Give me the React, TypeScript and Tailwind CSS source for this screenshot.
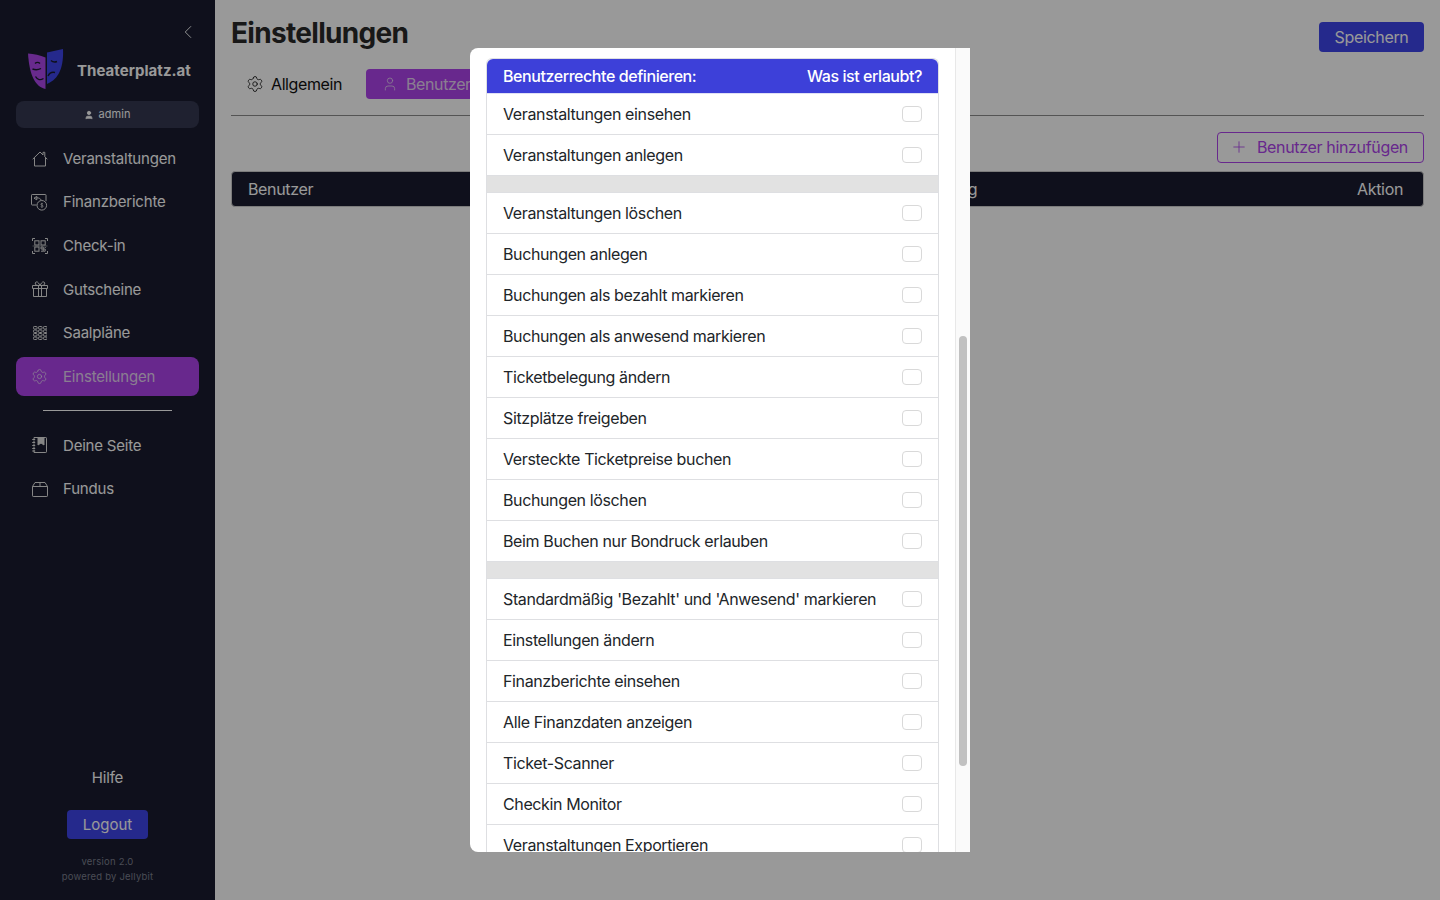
import React from "react";
import { Settings, User, Plus, ChevronLeft } from "lucide-react";

const ff = { fontFamily: "Inter, 'Liberation Sans', sans-serif" };

function HomeIcon() {
  return (
    <svg width="16" height="16" viewBox="0 0 16 16" fill="none" stroke="currentColor" strokeWidth="1" strokeLinejoin="round">
      <path d="M.7 8.200 8 1l3 3V1.300h1.800v4.500l2.500 2.400" />
      <path d="M2.500 6.800V15h11V6.800" />
    </svg>
  );
}

function FinanceIcon() {
  return (
    <svg width="17" height="17" viewBox="0 0 17 17" fill="none" stroke="currentColor" strokeWidth="1">
      <path d="M5.500 11H1.200a.7.7 0 0 1-.7-.7V1.200a.7.7 0 0 1 .7-.7h13.100a.7.7 0 0 1 .7.7v6" />
      <path d="M3 4.200 5.800 2.400v3.400zM5.800 3.800c2 0 3.700.8 4.500 2.300" />
      <circle cx="10.800" cy="11.300" r="4.800" />
      <path d="M12 9.900c-.7-.6-2.200-.5-2.200.4 0 1.100 2.400.8 2.400 1.900 0 1-1.700 1-2.500.4M10.900 8.800v5" strokeWidth="0.7" />
    </svg>
  );
}

function NotebookIcon() {
  return (
    <svg width="15" height="16" viewBox="0 0 15 16" fill="none" stroke="currentColor" strokeWidth="1">
      <path d="M2 .5h11.800a.7.700 0 0 1 .7.7v13.600a.7.700 0 0 1-.7.700H2" />
      <path d="M.2 2.500h3M.2 5.500h3M.2 8.500h3M.2 11.500h3M.2 14h3" />
      <path d="M2 .5v2M2 3.500v2M2 6.500v2M2 9.500v2M2 12.500v3" />
      <path d="M6 .5h6v7.500L9 6 6 8z" fill="currentColor" />
    </svg>
  );
}

function BoxIcon() {
  return (
    <svg width="16" height="15" viewBox="0 0 16 15" fill="none" stroke="currentColor" strokeWidth="1">
      <path d="M.5 4.500h15v9.300a.7.700 0 0 1-.7.700H1.200a.7.700 0 0 1-.7-.7z" />
      <path d="M.5 4.500 3 .5h10l2.500 4" />
      <path d="M8 .8v3.700" />
    </svg>
  );
}

function GiftIcon() {
  return (
    <svg width="16" height="16" viewBox="0 0 16 16" fill="none" stroke="currentColor" strokeWidth="1">
      <path d="M.5 4.500h15v3h-15zM1.500 7.500v8h13v-8" />
      <path d="M6.500 4.500v11M9.500 4.500v11" />
      <path d="M6.500 4.500C4 4.500 3 3.500 3.300 2 3.700.5 5.500.5 6.500 2l1.500 2.500L9.500 2c1-1.500 2.800-1.500 3.200 0 .3 1.500-.7 2.500-3.200 2.500" />
    </svg>
  );
}

function SeatsIcon() {
  const cells = [];
  for (let y = 0; y < 4; y++) {
    for (let x = 0; x < 3; x++) {
      cells.push(<rect key={`${x}-${y}`} x={0.5 + x * 5} y={0.5 + y * 3.500} width="3.600" height="2.500" rx="0.8" />);
    }
  }
  return (
    <svg width="14" height="14" viewBox="0 0 14 14" fill="none" stroke="currentColor" strokeWidth="1">
      {cells}
    </svg>
  );
}

function QrIcon() {
  return (
    <svg width="16" height="16" viewBox="0 0 16 16" fill="none" stroke="currentColor" strokeWidth="1">
      <path d="M.5 3V.5H3M13 .5h2.500V3M15.500 13v2.500H13M3 15.500H.5V13" />
      <rect x="2.800" y="2.800" width="4.200" height="4.200" />
      <rect x="9" y="2.800" width="4.200" height="4.200" />
      <rect x="2.800" y="9" width="4.200" height="4.200" />
      <path d="M9 9h2.200v2H9zM11.200 11h2v2.200h-2zM9 13.200h2M13.200 9v1" />
      <path d="M.5 8h15" strokeWidth="0.5" />
    </svg>
  );
}

function Logo() {
  return (
    <svg width="36" height="41" viewBox="0 0 36 41">
      <path d="M0 4.500C6 5 12 6.300 17.500 8.500V40C8 38 1.500 28 0 4.500z" fill="#ad47eb" />
      <path d="M19 3.500 35 0c.5 10-1 19-4.500 25-3 5-7 8-11.500 10z" fill="#3f45e9" />
      <path d="M7 14.500c1.500-1.500 3.500-1.500 5 0M4.500 20c3 1.200 6 .8 8.500-.5M7.500 27.500c2 3.500 5 4 8 2" stroke="#191c2f" strokeWidth="1.400" fill="none" />
      <path d="M23 11.500c1.500 1.500 3.500 2 6 1M20 27c1.500-3 3.500-4.500 7-3.500" stroke="#191c2f" strokeWidth="1.400" fill="none" />
    </svg>
  );
}

const nav: [string, React.ReactNode, boolean?][] = [
  ["Veranstaltungen", <HomeIcon />],
  ["Finanzberichte", <FinanceIcon />],
  ["Check-in", <QrIcon />],
  ["Gutscheine", <GiftIcon />],
  ["Saalpläne", <SeatsIcon />],
  ["Einstellungen", <Settings size={19} strokeWidth={1} />, true],
];

function NavItem({ label, icon, active }: { label: string; icon: React.ReactNode; active?: boolean }) {
  return (
    <div className={`flex h-[39px] items-center rounded-lg pl-[15px] ${active ? "bg-[#ad43eb]" : ""}`}>
      <span className={`flex w-[17px] justify-center ${active ? "text-[#efe2f8]" : "text-[#e0e0e0]"}`}>{icon}</span>
      <span className={`ml-[15px] pt-[1px] text-[15px] tracking-[-0.2px] ${active ? "text-[#e6d3f2]" : "text-white"}`}>{label}</span>
    </div>
  );
}

function Sidebar() {
  return (
    <aside className="flex h-[900px] w-[215px] shrink-0 flex-col bg-[#191c2f] px-4">
      <div className="flex justify-end pt-[21px] text-white">
        <ChevronLeft size={22} strokeWidth={1} />
      </div>
      <div className="mt-[6px] flex items-center pl-[12px]">
        <Logo />
        <span className="ml-[13px] pt-[4px] text-[15px] font-bold tracking-[0.05px] text-white">Theaterplatz.at</span>
      </div>
      <div className="mt-[11px] flex h-[27px] items-center justify-center gap-1 rounded-lg bg-[#343750] text-[11px] tracking-[0.1px] text-white">
        <User size={10} fill="currentColor" />
        <span>admin</span>
      </div>
      <nav className="mt-[11px] flex flex-col gap-[4.600px]">
        {nav.map(([l, i, a]) => (
          <NavItem key={l} label={l} icon={i} active={a} />
        ))}
      </nav>
      <div className="mx-[27px] mt-[14px] h-px bg-white" />
      <div className="mt-[15px] flex flex-col gap-[4.600px]">
        <NavItem label="Deine Seite" icon={<NotebookIcon />} />
        <NavItem label="Fundus" icon={<BoxIcon />} />
      </div>
      <div className="mt-auto flex flex-col items-center pb-[16px]">
        <span className="text-[15px] tracking-[-0.2px] text-white">Hilfe</span>
        <div className="mt-[21px] flex h-[29px] w-[81px] items-center justify-center rounded bg-[#3f45e9] pt-[1px] text-[15px] text-white">Logout</div>
        <div className="mt-[15px] text-center text-[9.500px] leading-[15px] tracking-[0.2px] text-[#7d7f8e]">
          <div>version 2.0</div>
          <div>powered by Jellybit</div>
        </div>
      </div>
    </aside>
  );
}

function Main() {
  return (
    <main className="flex min-w-0 flex-1 flex-col pr-4 pl-4">
      <div className="flex items-start justify-between pt-[22px]">
        <h1 className="text-[28px] leading-[22px] font-bold tracking-[-0.68px] text-[#282828]">Einstellungen</h1>
        <div className="flex h-[30px] w-[105px] items-center justify-center rounded bg-[#3f45e9] text-[16px] tracking-[-0.33px] text-white">Speichern</div>
      </div>
      <div className="mt-[17px] flex h-[47px] items-start border-b border-[#8c8c8c] pl-[15px]">
        <div className="flex h-[30px] items-center gap-[7px] text-[16px] tracking-[-0.4px] text-[#111111]">
          <Settings size={18} strokeWidth={1.100} />
          <span>Allgemein</span>
        </div>
        <div className="ml-[24px] flex h-[30px] w-[180px] items-center gap-2 rounded bg-[#ad43eb] pl-4 text-[16px] tracking-[-0.4px] text-[#e6d3f2]">
          <User size={16} strokeWidth={1.200} />
          <span>Benutzer</span>
        </div>
      </div>
      <div className="mt-4 flex justify-end">
        <div className="flex h-[31px] w-[207px] items-center justify-end gap-[9px] rounded border border-[#ad43eb] pr-[15px] pb-[2px] text-[16px] tracking-[-0.34px] text-[#ad43eb]">
          <Plus size={18} strokeWidth={1.100} />
          <span>Benutzer hinzufügen</span>
        </div>
      </div>
      <div className="mt-[8px] flex h-[36px] items-center rounded border border-[#cfcfcf] bg-[#191c2f] pr-5 pb-[1px] pl-4 text-[16px] tracking-[-0.35px] text-white">
        <span>Benutzer</span>
        <span className="ml-auto">Berechtigung</span>
        <span className="ml-[380px]">Aktion</span>
      </div>
    </main>
  );
}

const group1 = ["Veranstaltungen einsehen", "Veranstaltungen anlegen"];
const group2 = [
  "Veranstaltungen löschen",
  "Buchungen anlegen",
  "Buchungen als bezahlt markieren",
  "Buchungen als anwesend markieren",
  "Ticketbelegung ändern",
  "Sitzplätze freigeben",
  "Versteckte Ticketpreise buchen",
  "Buchungen löschen",
  "Beim Buchen nur Bondruck erlauben",
];
const group3 = [
  "Standardmäßig 'Bezahlt' und 'Anwesend' markieren",
  "Einstellungen ändern",
  "Finanzberichte einsehen",
  "Alle Finanzdaten anzeigen",
  "Ticket-Scanner",
  "Checkin Monitor",
  "Veranstaltungen Exportieren",
];

function Row({ label }: { label: string }) {
  return (
    <div className="flex h-[41px] shrink-0 items-center justify-between border-b border-[#dedfe2] pr-4 pl-4 text-[16px] tracking-[-0.375px] text-[#212529]">
      <span>{label}</span>
      <span className="h-4 w-5 rounded border border-[#d9d9d9] bg-white" />
    </div>
  );
}

const Gap = () => <div className="h-[17px] shrink-0 border-b border-[#dedfe2] bg-[#e2e2e2]" />;

function Modal() {
  return (
    <div className="absolute top-[48px] left-[470px] flex h-[804px] w-[500px] overflow-hidden rounded-l-lg bg-white">
      <div className="min-w-0 flex-1 pt-[10px] pl-4">
        <div className="w-[453px] rounded-t-md border-x border-t border-[#dedfe2]">
          <div className="flex h-[35px] items-center justify-between rounded-t-md border-b border-[#dfe0f5] bg-[#3d40d9] px-4 text-[16px] font-medium tracking-[-0.43px] text-white">
            <span>Benutzerrechte definieren:</span>
            <span>Was ist erlaubt?</span>
          </div>
          {group1.map((l) => <Row key={l} label={l} />)}
          <Gap />
          {group2.map((l) => <Row key={l} label={l} />)}
          <Gap />
          {group3.map((l) => <Row key={l} label={l} />)}
        </div>
      </div>
      <div className="w-[15px] shrink-0 border-l border-[#e8e8e8] bg-[#fafafa] pt-[288px] pl-[3px]">
        <div className="h-[430px] w-2 rounded-full bg-[#c1c1c1]" />
      </div>
    </div>
  );
}

export default function App() {
  return (
    <div className="relative flex h-[900px] w-[1440px] overflow-hidden bg-white" style={ff}>
      <Sidebar />
      <Main />
      <div className="absolute inset-0 bg-black/40" />
      <Modal />
    </div>
  );
}
